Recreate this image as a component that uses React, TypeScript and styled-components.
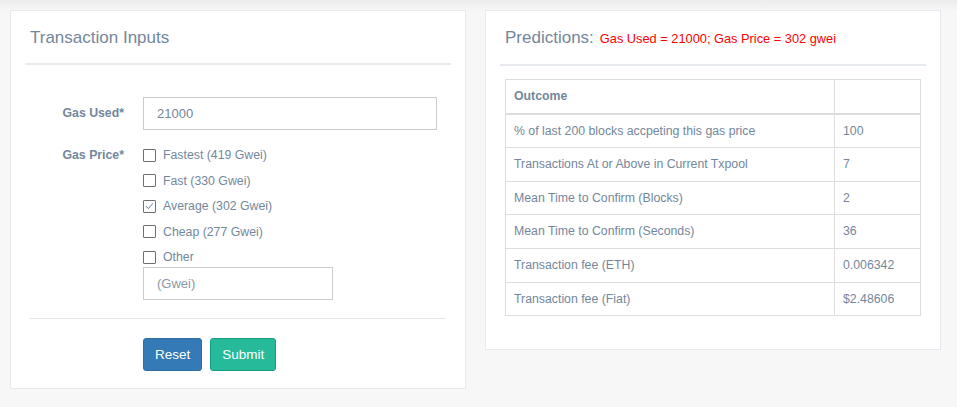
import React from 'react';
import styled, { createGlobalStyle } from 'styled-components';

const GlobalStyle = createGlobalStyle`
  html, body {
    margin: 0;
    padding: 0;
  }
  body {
    background: linear-gradient(180deg, #ededed 0px, #f7f7f7 12px) #f7f7f7;
    font-family: "Liberation Sans", Arial, sans-serif;
    font-size: 12.3px;
    color: #73879c;
  }
`;

const Page = styled.div`
  display: flex;
  align-items: flex-start;
  gap: 19px;
  padding: 10px;
  min-height: 387px;
`;

const Panel = styled.section`
  width: 456px;
  box-sizing: border-box;
  background: #fff;
  border: 1px solid #e6e9ed;
  padding: 0 14px;
`;

const PanelTitle = styled.div`
  display: flex;
  align-items: baseline;
  gap: 6px;
  padding: 17px 5px 15px;
  border-bottom: 2px solid #e6e9ed;
  line-height: 20px;
`;

const TitleText = styled.h2`
  margin: 0;
  font-size: 17px;
  font-weight: 400;
  color: #73879c;
`;

const Highlight = styled.span`
  color: #ff0000;
  font-size: 12.8px;
`;

const Form = styled.form`
  padding-top: 32px;
  padding-bottom: 17px;
`;

const FormRow = styled.div<{ $top?: number }>`
  display: grid;
  grid-template-columns: 99px 1fr;
  column-gap: 19px;
  align-items: start;
  margin-top: ${p => p.$top ?? 0}px;
`;

const Label = styled.label<{ $height: number }>`
  font-weight: 700;
  text-align: right;
  line-height: ${p => p.$height}px;
`;

const TextInput = styled.input<{ $width: number }>`
  box-sizing: border-box;
  width: ${p => p.$width}px;
  height: 33px;
  border: 1px solid #ccc;
  padding: 0 13px;
  font-family: inherit;
  font-size: 13px;
  color: #73879c;
  outline: none;
  &::placeholder {
    color: #8a97a6;
  }
`;

const CheckList = styled.div`
  display: flex;
  flex-direction: column;
  gap: 7.5px;
`;

const CheckItem = styled.div`
  display: flex;
  align-items: center;
  gap: 7px;
  height: 18px;
`;

const Box = styled.span`
  box-sizing: border-box;
  width: 13px;
  height: 13px;
  border: 1px solid #6f6f6f;
  border-radius: 1px;
  background: #fff;
  display: flex;
  align-items: center;
  justify-content: center;
`;

const Divider = styled.hr`
  border: 0;
  border-top: 1px solid #e5e5e5;
  margin: 18px 5px 19px;
`;

const Actions = styled.div`
  display: flex;
  gap: 8px;
  padding-left: 118px;
`;

const Button = styled.button<{ $tone: 'primary' | 'success' }>`
  height: 33px;
  padding: 0 11px;
  border-radius: 3px;
  font-family: inherit;
  font-size: 13.5px;
  color: #fff;
  background: ${p => (p.$tone === 'primary' ? '#337ab7' : '#26b99a')};
  border: 1px solid ${p => (p.$tone === 'primary' ? '#2e6da4' : '#169f85')};
`;

const TableWrap = styled.div`
  padding: 13px 5px 33px;
`;

const Table = styled.table`
  width: 100%;
  border-collapse: collapse;
  line-height: 16.6px;
`;

const Th = styled.th<{ $wide?: boolean }>`
  text-align: left;
  font-weight: 700;
  padding: 8px;
  border: 1px solid #ddd;
  border-bottom-width: 2px;
  width: ${p => (p.$wide ? '312px' : 'auto')};
`;

const Td = styled.td`
  padding: 8px;
  border: 1px solid #ddd;
`;

const Check = () => (
  <svg width="9" height="8" viewBox="0 0 9 8">
    <path d="M1 4.2 L3.4 6.6 L8 1.2" fill="none" stroke="#5f7a99" strokeWidth="1" />
  </svg>
);

const prices = [
  { label: 'Fastest (419 Gwei)', checked: false },
  { label: 'Fast (330 Gwei)', checked: false },
  { label: 'Average (302 Gwei)', checked: true },
  { label: 'Cheap (277 Gwei)', checked: false },
  { label: 'Other', checked: false },
];

const outcomes: [string, string][] = [
  ['% of last 200 blocks accpeting this gas price', '100'],
  ['Transactions At or Above in Current Txpool', '7'],
  ['Mean Time to Confirm (Blocks)', '2'],
  ['Mean Time to Confirm (Seconds)', '36'],
  ['Transaction fee (ETH)', '0.006342'],
  ['Transaction fee (Fiat)', '$2.48606'],
];

const App: React.FC = () => {
  return (
    <>
      <GlobalStyle />
      <Page>
        <Panel>
          <PanelTitle>
            <TitleText>Transaction Inputs</TitleText>
          </PanelTitle>
          <Form onSubmit={e => e.preventDefault()}>
            <FormRow>
              <Label $height={33}>Gas Used*</Label>
              <TextInput $width={294} defaultValue="21000" />
            </FormRow>
            <FormRow $top={16}>
              <Label $height={18}>Gas Price*</Label>
              <div>
                <CheckList>
                  {prices.map(p => (
                    <CheckItem key={p.label}>
                      <Box>{p.checked && <Check />}</Box>
                      <span>{p.label}</span>
                    </CheckItem>
                  ))}
                </CheckList>
                <TextInput $width={190} placeholder="(Gwei)" style={{ marginTop: 1 }} />
              </div>
            </FormRow>
            <Divider />
            <Actions>
              <Button type="button" $tone="primary">Reset</Button>
              <Button type="submit" $tone="success">Submit</Button>
            </Actions>
          </Form>
        </Panel>

        <Panel>
          <PanelTitle>
            <TitleText>Predictions:</TitleText>
            <Highlight>Gas Used = 21000; Gas Price = 302 gwei</Highlight>
          </PanelTitle>
          <TableWrap>
            <Table>
              <thead>
                <tr>
                  <Th $wide>Outcome</Th>
                  <Th />
                </tr>
              </thead>
              <tbody>
                {outcomes.map(([name, value]) => (
                  <tr key={name}>
                    <Td>{name}</Td>
                    <Td>{value}</Td>
                  </tr>
                ))}
              </tbody>
            </Table>
          </TableWrap>
        </Panel>
      </Page>
    </>
  );
};

export default App;
